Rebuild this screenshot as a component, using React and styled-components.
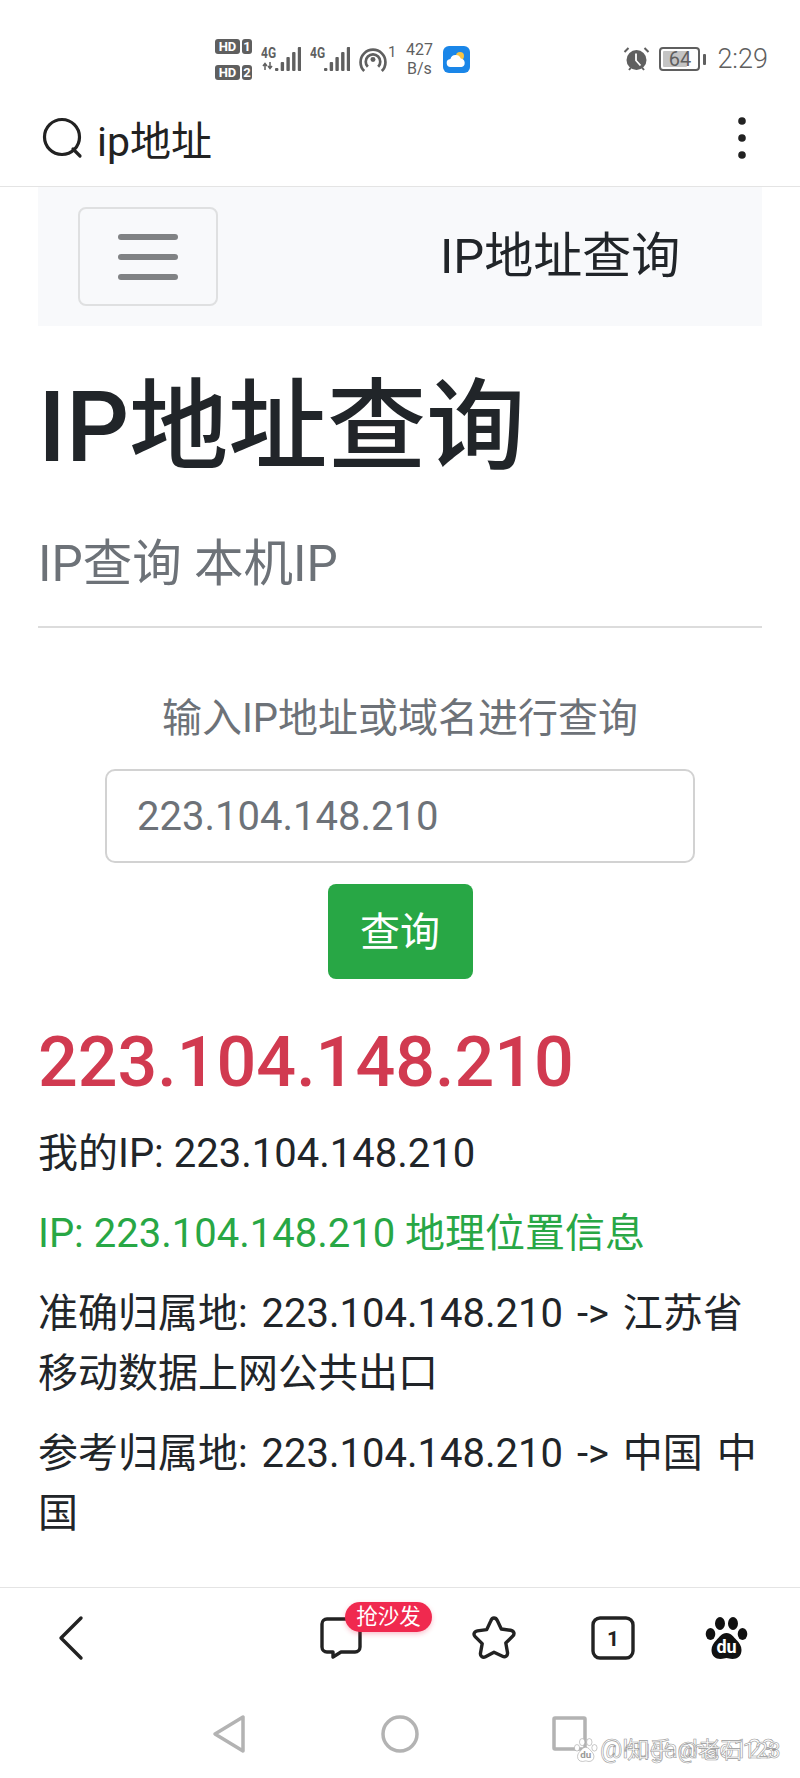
import React from 'react';
import styled, { createGlobalStyle } from 'styled-components';

const GlobalStyle = createGlobalStyle`
  html, body {
    margin: 0;
    padding: 0;
    background: #fff;
  }
  body {
    font-family: Roboto, "Noto Sans CJK SC", sans-serif;
    color: #212529;
  }
  * {
    box-sizing: border-box;
  }
`;

const Phone = styled.div`
  width: 800px;
  height: 1778px;
  display: flex;
  flex-direction: column;
  overflow: hidden;
  background: #fff;
`;

const StatusBar = styled.div`
  height: 90px;
  flex: none;
  display: flex;
  align-items: center;
  padding: 28px 32px 0 215px;
  color: #5f5f5f;
`;

const SimBadges = styled.div`
  display: flex;
  flex-direction: column;
  gap: 11px;
  margin-right: 9px;
`;

const SimRow = styled.div`
  display: flex;
  gap: 2px;
`;

const SimChip = styled.span`
  height: 15px;
  width: ${(p) => (p.$wide ? '25px' : '10px')};
  border-radius: 3px;
  background: #5f5f5f;
  color: #fff;
  font-size: 13px;
  font-weight: 700;
  line-height: 15px;
  text-align: center;
`;

const SignalWrap = styled.div`
  position: relative;
  width: 40px;
  height: 26px;
  margin-right: 9px;
`;

const SignalLabel = styled.span`
  position: absolute;
  left: 0;
  top: 0;
  font-size: 15px;
  font-weight: 700;
  line-height: 14px;
  transform: scaleX(0.8);
  transform-origin: left;
`;

const HotspotCount = styled.span`
  font-size: 15px;
  align-self: flex-start;
  margin: 17px 8px 0 1px;
  line-height: 14px;
`;

const Speed = styled.div`
  width: 30px;
  margin-right: 9px;
  font-size: 16px;
  line-height: 19px;
  text-align: center;
`;

const StatusRight = styled.div`
  margin-left: auto;
  display: flex;
  align-items: center;
`;

const Battery = styled.div`
  position: relative;
  width: 41px;
  height: 24px;
  margin: 0 3px 0 9px;
  border: 2px solid #5f5f5f;
  border-radius: 4px;
  font-size: 20px;
  line-height: 20px;
  text-align: center;
`;

const BatteryFill = styled.span`
  position: absolute;
  left: 2px;
  top: 2px;
  bottom: 2px;
  border-radius: 1px;
  background: #c4c4c4;
`;

const BatteryText = styled.span`
  position: relative;
`;

const BatteryTip = styled.span`
  width: 3px;
  height: 11px;
  background: #5f5f5f;
  border-radius: 1px;
`;

const Clock = styled.span`
  margin-left: 11px;
  font-size: 27px;
  font-weight: 300;
  line-height: 32px;
`;

const SearchBar = styled.div`
  height: 97px;
  flex: none;
  display: flex;
  align-items: center;
  padding: 0 53px 0 42px;
  border-bottom: 1px solid #e4e4e4;
`;

const SearchText = styled.span`
  margin-left: 13px;
  flex: 1;
  font-size: 41px;
  color: #222;
`;

const Main = styled.main`
  flex: 1;
  min-height: 0;
  padding: 0 38px;
`;

const Navbar = styled.nav`
  height: 139px;
  display: flex;
  align-items: center;
  padding-left: 40px;
  background: #f8f9fb;
`;

const Toggler = styled.button`
  width: 140px;
  height: 99px;
  padding: 0;
  display: flex;
  flex-direction: column;
  align-items: center;
  justify-content: center;
  gap: 14px;
  background: transparent;
  border: 2px solid #dfe0e1;
  border-radius: 8px;
`;

const TogglerBar = styled.span`
  width: 60px;
  height: 6px;
  border-radius: 3px;
  background: #808284;
`;

const Brand = styled.span`
  margin: 0 0 10px 222px;
  font-size: 49px;
  color: #212529;
`;

const Title = styled.h1`
  margin: 43px 0 0;
  font-size: 99px;
  font-weight: 500;
  line-height: 116px;
`;

const Lead = styled.p`
  margin: 43px 0 0;
  font-size: 49.5px;
  line-height: 72px;
  color: #6d7278;
`;

const Rule = styled.hr`
  margin: 26px 0 0;
  border: 0;
  border-top: 2px solid #dcdcdc;
`;

const QueryForm = styled.form`
  display: flex;
  flex-direction: column;
  align-items: center;
`;

const FormLabel = styled.label`
  margin-top: 61px;
  font-size: 40px;
  line-height: 60px;
  color: #6d7278;
`;

const IpInput = styled.input`
  width: 590px;
  height: 94px;
  margin-top: 20px;
  padding: 0 30px;
  border: 2px solid #d2d2d2;
  border-radius: 10px;
  background: #fff;
  color: #6d7278;
  font: 400 40px Roboto, "Noto Sans CJK SC", sans-serif;
`;

const QueryButton = styled.button`
  width: 145px;
  height: 95px;
  margin-top: 21px;
  padding: 0 0 6px;
  border: 0;
  border-radius: 8px;
  background: #28a745;
  color: #fff;
  font: 400 40px Roboto, "Noto Sans CJK SC", sans-serif;
`;

const IpHeading = styled.h2`
  margin: 37px 0 0;
  font-size: 70px;
  font-weight: 500;
  line-height: 92px;
  color: #d13a50;
`;

const InfoLine = styled.p`
  margin: ${(p) => p.$gap || 20}px 0 0;
  font-size: 40px;
  line-height: 60px;
  color: ${(p) => p.$color || '#212529'};
  word-spacing: ${(p) => (p.$spaced ? '4px' : '0')};
`;

const Toolbar = styled.div`
  position: relative;
  height: 103px;
  flex: none;
  display: flex;
  align-items: center;
  border-top: 1px solid #e4e4e4;
`;

const ToolSlot = styled.div`
  position: absolute;
  left: ${(p) => p.$x}px;
  top: 20px;
  width: 60px;
  height: 60px;
  display: flex;
  align-items: center;
  justify-content: center;
`;

const SofaBadge = styled.span`
  position: absolute;
  left: 345px;
  top: 14px;
  width: 87px;
  height: 30px;
  border-radius: 15px;
  background: #f0294f;
  box-shadow: 0 2px 5px rgba(240, 41, 79, 0.3);
  color: #fff;
  font-size: 21.5px;
  line-height: 30px;
  text-align: center;
`;

const SystemNav = styled.div`
  position: relative;
  height: 88px;
  flex: none;
  display: flex;
  align-items: center;
`;

const SystemSlot = styled.div`
  position: absolute;
  left: ${(p) => p.$x}px;
  top: 22px;
  width: 44px;
  height: 44px;
`;

const Watermark = styled.div`
  position: absolute;
  left: 574px;
  top: 46px;
  display: flex;
  align-items: center;
  gap: 2px;
`;

const WatermarkLayers = styled.div`
  display: grid;
  line-height: 28px;
  color: #fff;
  -webkit-text-stroke: 0.6px #999;
  white-space: nowrap;
`;

const WatermarkName = styled.span`
  grid-area: 1 / 1;
  font-size: 25px;
`;

const WatermarkSite = styled.span`
  grid-area: 1 / 1;
  margin-left: 27px;
  font-size: 22.5px;
`;

const SignalIcon = ({ bars, arrows }) => (
  <svg width="40" height="26" viewBox="0 0 40 26" fill="#5f5f5f">
    {arrows && (
      <path d="M4 24v-6M2 20l2-2.500 2 2.500M9 16v6M7 20l2 2.500 2-2.500" stroke="#5f5f5f" strokeWidth="1.500" fill="none" />
    )}
    {bars.map((h, i) => (
      <rect key={i} x={i * 5.7 + 14} y={25 - h} width="3.400" height={h} rx="1" />
    ))}
  </svg>
);

const HotspotIcon = () => (
  <svg width="28" height="28" viewBox="0 0 27 27" fill="none" stroke="#5f5f5f" strokeWidth="2.600">
    <circle cx="13.500" cy="14" r="2.400" fill="#5f5f5f" stroke="none" />
    <path d="M8.500 21a7 7 0 1 1 10 0" />
    <path d="M5 25a12 12 0 1 1 17 0" />
  </svg>
);

const WeatherIcon = () => (
  <svg width="27" height="27" viewBox="0 0 27 27">
    <rect width="27" height="27" rx="6" fill="#1a86e8" />
    <circle cx="17" cy="10" r="4" fill="#f6c445" />
    <path d="M8 21a4 4 0 0 1-.6-8 5.500 5.500 0 0 1 10.400-.6A4.400 4.400 0 0 1 18.500 21z" fill="#fff" />
  </svg>
);

const AlarmIcon = () => (
  <svg width="27" height="26" viewBox="0 0 27 26">
    <circle cx="13.500" cy="14" r="10" fill="#5f5f5f" />
    <path d="M1.500 6l4-4M25.500 6l-4-4M6 24l2-2.500M21 24l-2-2.500" stroke="#5f5f5f" strokeWidth="2" fill="none" />
    <path d="M13 7.500v7l4.500 5" stroke="#fff" strokeWidth="1.800" fill="none" />
  </svg>
);

const SearchIcon = () => (
  <svg width="42" height="42" viewBox="0 0 42 42" fill="none" stroke="#222" strokeWidth="3.200" strokeLinecap="round">
    <circle cx="20" cy="20" r="17.500" />
    <path d="M31 32l7 7" />
  </svg>
);

const MoreIcon = () => (
  <svg width="10" height="44" viewBox="0 0 10 44" fill="#222">
    <circle cx="5" cy="5" r="3.800" />
    <circle cx="5" cy="22" r="3.800" />
    <circle cx="5" cy="39" r="3.800" />
  </svg>
);

const BackIcon = () => (
  <svg width="26" height="46" viewBox="0 0 26 46" fill="none" stroke="#222" strokeWidth="3.400" strokeLinecap="round" strokeLinejoin="round">
    <path d="M23 3L3 23l20 20" />
  </svg>
);

const ChatIcon = () => (
  <svg width="44" height="44" viewBox="0 0 44 44" fill="none" stroke="#222" strokeWidth="3.400" strokeLinejoin="round">
    <path d="M8 3h28a5 5 0 0 1 5 5v23a5 5 0 0 1-5 5H22l-8 5v-5H8a5 5 0 0 1-5-5V8a5 5 0 0 1 5-5z" />
  </svg>
);

const StarIcon = () => (
  <svg width="48" height="46" viewBox="0 0 48 46" fill="none" stroke="#222" strokeWidth="3.400" strokeLinejoin="round">
    <path d="M24 3c1.600 0 2.600 1 3.300 2.500l4 8.500 9.300 1.300c3.400.5 4.500 3.700 2 6l-6.800 6.700 1.700 9.500c.5 3.200-2.300 5.200-5 3.700L24 37.300l-8.500 4.500c-2.700 1.500-5.500-.5-5-3.700l1.700-9.500-6.800-6.700c-2.500-2.300-1.400-5.500 2-6l9.300-1.300 4-8.500C21.400 4 22.400 3 24 3z" />
  </svg>
);

const TabsIcon = () => (
  <svg width="44" height="44" viewBox="0 0 44 44">
    <rect x="2" y="2" width="40" height="40" rx="7" fill="none" stroke="#222" strokeWidth="3.400" />
    <text x="22" y="30" textAnchor="middle" fontSize="21" fontWeight="700" fontFamily="Roboto" fill="#222">1</text>
  </svg>
);

const PawIcon = ({ size = 44, fill = '#111', stroke = 'none' }) => (
  <svg width={size} height={size} viewBox="0 0 44 44" fill={fill} stroke={stroke}>
    <ellipse cx="15" cy="7.500" rx="5" ry="6.500" />
    <ellipse cx="28" cy="7.500" rx="5" ry="6.500" />
    <ellipse cx="5.500" cy="18" rx="4.800" ry="6" />
    <ellipse cx="37.500" cy="18" rx="4.800" ry="6" />
    <path d="M21.500 17c5 0 7 4 10 7 3 3 5 6 5 10 0 6-4 9-9 9-3 0-4-1-6-1s-3 1-6 1c-5 0-9-3-9-9 0-4 2-7 5-10 3-3 5-7 10-7z" />
    <text x="21.500" y="37" textAnchor="middle" fontSize="18" fontWeight="700" fontFamily="Roboto" fill={stroke === 'none' ? '#fff' : '#999'} stroke="none">du</text>
  </svg>
);

const App = () => (
  <Phone>
    <GlobalStyle />
    <StatusBar>
      <SimBadges>
        <SimRow><SimChip $wide>HD</SimChip><SimChip>1</SimChip></SimRow>
        <SimRow><SimChip $wide>HD</SimChip><SimChip>2</SimChip></SimRow>
      </SimBadges>
      <SignalWrap>
        <SignalLabel>4G</SignalLabel>
        <SignalIcon bars={[3, 9, 14, 19, 24]} arrows />
      </SignalWrap>
      <SignalWrap>
        <SignalLabel>4G</SignalLabel>
        <SignalIcon bars={[3, 9, 14, 19, 24]} />
      </SignalWrap>
      <HotspotIcon />
      <HotspotCount>1</HotspotCount>
      <Speed>427<br />B/s</Speed>
      <WeatherIcon />
      <StatusRight>
        <AlarmIcon />
        <Battery>
          <BatteryFill style={{ width: '64%' }} />
          <BatteryText>64</BatteryText>
        </Battery>
        <BatteryTip />
        <Clock>2:29</Clock>
      </StatusRight>
    </StatusBar>
    <SearchBar>
      <SearchIcon />
      <SearchText>ip地址</SearchText>
      <MoreIcon />
    </SearchBar>
    <Main>
      <Navbar>
        <Toggler type="button">
          <TogglerBar />
          <TogglerBar />
          <TogglerBar />
        </Toggler>
        <Brand>IP地址查询</Brand>
      </Navbar>
      <Title>IP地址查询</Title>
      <Lead>IP查询 本机IP</Lead>
      <Rule />
      <QueryForm>
        <FormLabel>输入IP地址或域名进行查询</FormLabel>
        <IpInput defaultValue="223.104.148.210" />
        <QueryButton type="button">查询</QueryButton>
      </QueryForm>
      <IpHeading>223.104.148.210</IpHeading>
      <InfoLine $gap={16}>我的IP: 223.104.148.210</InfoLine>
      <InfoLine $color="#28a745">IP: 223.104.148.210 地理位置信息</InfoLine>
      <InfoLine $spaced>准确归属地: 223.104.148.210 -&gt; 江苏省 移动数据上网公共出口</InfoLine>
      <InfoLine $spaced>参考归属地: 223.104.148.210 -&gt; 中国 中国</InfoLine>
    </Main>
    <Toolbar>
      <ToolSlot $x={41}><BackIcon /></ToolSlot>
      <ToolSlot $x={311}><ChatIcon /></ToolSlot>
      <SofaBadge>抢沙发</SofaBadge>
      <ToolSlot $x={464}><StarIcon /></ToolSlot>
      <ToolSlot $x={583}><TabsIcon /></ToolSlot>
      <ToolSlot $x={697}><PawIcon /></ToolSlot>
    </Toolbar>
    <SystemNav>
      <SystemSlot $x={206}>
        <svg width="44" height="44" viewBox="0 0 44 44" fill="none" stroke="#b3b3b3" strokeWidth="3.500" strokeLinejoin="round">
          <path d="M37 5v34L9 22z" />
        </svg>
      </SystemSlot>
      <SystemSlot $x={378}>
        <svg width="44" height="44" viewBox="0 0 44 44" fill="none" stroke="#b3b3b3" strokeWidth="3.500">
          <circle cx="22" cy="22" r="17" />
        </svg>
      </SystemSlot>
      <SystemSlot $x={547}>
        <svg width="44" height="44" viewBox="0 0 44 44" fill="none" stroke="#b3b3b3" strokeWidth="3.500" strokeLinejoin="round">
          <rect x="7" y="6" width="31" height="31" rx="1" />
        </svg>
      </SystemSlot>
      <Watermark>
        <PawIcon size={24} fill="#fff" stroke="#999" />
        <WatermarkLayers>
          <WatermarkName>@hugaohao123</WatermarkName>
          <WatermarkSite>知乎 @老石123</WatermarkSite>
        </WatermarkLayers>
      </Watermark>
    </SystemNav>
  </Phone>
);

export default App;
